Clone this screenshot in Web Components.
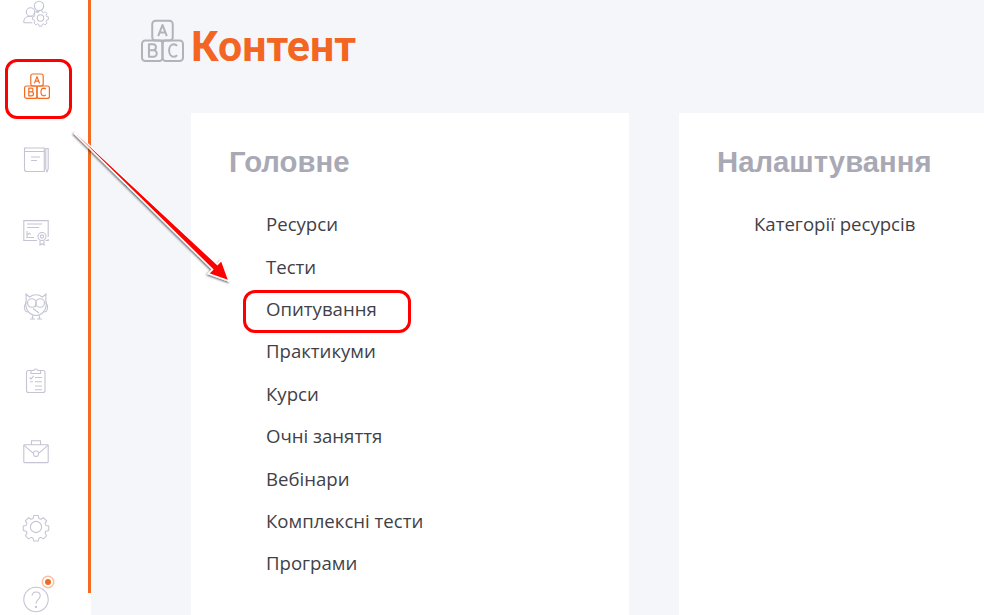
<!DOCTYPE html>
<html lang="uk">
<head>
<meta charset="utf-8">
<title>Контент</title>
<style>
    html, body { margin: 0; height: 100%; overflow: hidden; background: white; }
    body { font-family: "Open Sans", "Liberation Sans", sans-serif; }
</style>
</head>
<body>

<x-app>
    <x-sidebar slot="side">
        <x-nav-icon name="users"></x-nav-icon>
        <x-nav-icon name="blocks" active></x-nav-icon>
        <x-nav-icon name="notebook"></x-nav-icon>
        <x-nav-icon name="cert"></x-nav-icon>
        <x-nav-icon name="owl"></x-nav-icon>
        <x-nav-icon name="clipboard"></x-nav-icon>
        <x-nav-icon name="case"></x-nav-icon>
        <x-nav-icon name="gear"></x-nav-icon>
        <x-nav-icon name="help" dot></x-nav-icon>
    </x-sidebar>

    <x-page-title>Контент</x-page-title>

    <x-card heading="Головне">
        <x-link>Ресурси</x-link>
        <x-link>Тести</x-link>
        <x-link>Опитування</x-link>
        <x-link>Практикуми</x-link>
        <x-link>Курси</x-link>
        <x-link>Очні заняття</x-link>
        <x-link>Вебінари</x-link>
        <x-link>Комплексні тести</x-link>
        <x-link>Програми</x-link>
    </x-card>
    <x-card heading="Налаштування">
        <x-link>Категорії ресурсів</x-link>
    </x-card>
</x-app>

<script>
const blocks = `
    <g fill="none" stroke="currentColor" stroke-width="1.2" stroke-linejoin="round">
        <rect x="6.800" y="1" width="12.400" height="12" rx="2"/>
        <rect x=".6" y="13" width="12.400" height="12.400" rx="2"/>
        <rect x="13" y="13" width="12.400" height="12.400" rx="2"/>
        <path d="M10.400 10.400 13 3.600l2.600 6.800M11.300 8.200h3.400"/>
        <path d="M4.800 22.800v-7.600h2.400a1.800 1.800 0 0 1 0 3.700H4.800h2.800a1.900 1.900 0 0 1 0 3.900z"/>
        <path d="M21.800 16.200a2.700 2.700 0 0 0-1.900-1c-1.800 0-2.900 1.700-2.900 3.800s1.100 3.800 2.900 3.800a2.700 2.700 0 0 0 1.900-1"/>
    </g>`;

// line icons of the side menu, all on a 26px box
const icons = {
    users: `<g fill="none" stroke="currentColor" stroke-width="1.100">
        <circle cx="16" cy="6" r="4.700"/>
        <circle cx="7.500" cy="12" r="4.200"/>
        <path d="M.8 22.800v-1.500c0-3 2.800-5 6.700-5 .6 0 1.200 0 1.700.1M.8 22.800h8.500"/>
        <path d="M13 11.800c1-.4 2-.6 3-.6"/>
        <circle cx="17.500" cy="18" r="3.200"/>
        <path d="M16 9.800h3l.5 2 1.400.6 1.800-1.100 2.100 2.100-1.100 1.800.6 1.400 2 .5v3l-2 .5-.6 1.400 1.100 1.800-2.100 2.100-1.800-1.100-1.400.6-.5 2h-3l-.5-2-1.400-.6-1.800 1.100-2.100-2.100 1.100-1.800-.6-1.400-2-.5v-3l2-.5.6-1.400-1.100-1.800 2.100-2.100 1.800 1.100 1.400-.6z" transform="translate(0 -.3) translate(17.500 18.300) scale(.9) translate(-17.500 -18.300)" stroke-linejoin="round"/>
    </g>`,
    blocks,
    notebook: `<g fill="none" stroke="currentColor" stroke-width="1.100">
        <path d="M1.500 1h19.800v23.500H3.500a2 2 0 0 1-2-2z"/>
        <path d="M1.500 4.500h19.800M8 10h9M8 13.500h6"/>
        <path d="M22.800 1.500h2.400v20.500l-1.200 2.800-1.200-2.800z"/>
    </g>`,
    cert: `<g fill="none" stroke="currentColor" stroke-width="1.100">
        <path d="M14 20.500H.8V.6h24.400v16.500M22.500 20.500h2.700v-1.500"/>
        <path d="M4 4h15M4 7.500h12M4 11v6.500h7"/>
        <path d="M4.500 15l1.800-1.800 1.500 1.500"/>
        <circle cx="19" cy="16.500" r="4"/>
        <circle cx="19" cy="16.500" r="1.600"/>
        <path d="M17 20.500v4.500l2-1.300 2 1.300v-4.500"/>
    </g>`,
    owl: `<g fill="none" stroke="currentColor" stroke-width="1.100" transform="translate(1.500 0)">
        <path d="M1.500 0 5 3a11 11 0 0 1 13 0L21.500 0l-.2 6.500c1 3 .6 6-.8 9-1.300 2.500-4.500 6-9 6s-7.700-3.500-9-6C1.100 12.500.7 9.500 1.700 6.500z"/>
        <circle cx="7.300" cy="9" r="4.300"/>
        <circle cx="15.700" cy="9" r="4.300"/>
        <path d="M11.500 10.500l-1 2.800M1.700 9C-.5 11-.7 15 1 17c.5.500 1.500 1 2.300 1M21.300 9c2.200 2 2.400 6 .7 8-.5.500-1.500 1-2.300 1M8 25v-3.600M5.500 25h5M15 25v-3.600M12.500 25h5"/>
        <path d="M8.500 14.500l6 4.500"/>
    </g>`,
    clipboard: `<g fill="none" stroke="currentColor" stroke-width="1.100" transform="translate(3 0)">
        <path d="M5 3.500H2.500a2 2 0 0 0-2 2v18a2 2 0 0 0 2 2h14.500a2 2 0 0 0 2-2v-18a2 2 0 0 0-2-2H14.500"/>
        <path d="M5 6.500v-3h2.800a2 2 0 0 1 3.900 0h2.800v3z"/>
        <path d="M3.500 10.500l1.500 1.500 2.800-3.200M9 10.500h7M9 14.800h7M4 14.800h3M9 19h7M9 22.800h7"/>
    </g>`,
    case: `<g fill="none" stroke="currentColor" stroke-width="1.100">
        <rect x=".8" y="4.800" width="24.400" height="17.800" rx=".8"/>
        <path d="M8.500 4.800V.8h9v4M.8 5.200l9.600 8.100M25.200 5.200l-9.600 8.100"/>
        <rect x="10.600" y="11" width="4.800" height="5.400" rx="1.800"/>
    </g>`,
    gear: `<g fill="none" stroke="currentColor" stroke-width="1.100">
        <circle cx="13" cy="13" r="5.600"/>
        <path d="M10.600.8h4.800l.7 3.100 2.200.9 2.700-1.700 3.400 3.400-1.700 2.700.9 2.200 3.100.7v4.800l-3.100.7-.9 2.200 1.700 2.700-3.400 3.400-2.700-1.700-2.200.9-.7 3.100h-4.800l-.7-3.100-2.200-.9-2.700 1.700-3.400-3.400 1.700-2.700-.9-2.200-3.100-.7v-4.800l3.100-.7.9-2.200-1.700-2.700 3.400-3.400 2.700 1.700 2.200-.9z" transform="translate(13 13) scale(.93) translate(-13 -13.100)" stroke-linejoin="round"/>
    </g>`,
    help: `<g fill="none" stroke="currentColor" stroke-width="1.100">
        <circle cx="13" cy="12.500" r="12.200"/>
        <path d="M9 8.800c.3-2.200 2-3.800 4.200-3.800 2.300 0 4 1.600 4 3.800 0 3.500-4.200 3.700-4.200 7.700"/>
        <circle cx="13" cy="20" r=".6"/>
    </g>`
};

class XApp extends HTMLElement {
    constructor () {
        super();
        this.attachShadow({ mode: 'open' }).innerHTML = `
            <style>
                :host { display: grid; grid-template-columns: 91px 1fr; height: 615px; position: relative; overflow: hidden; background: white; }
                main { background: #f4f6fa; padding-inline-start: 100px; overflow: hidden; display: grid;
                    grid-template-columns: 438px 438px; grid-template-rows: 113px 1fr; column-gap: 50px; }
                ::slotted(x-page-title) { grid-column: 1 / -1; }
                .mark { position: absolute; border: 3px solid #f00; box-sizing: border-box; border-radius: 12px; }
                svg.arrow { position: absolute; left: 0; top: 0; overflow: visible; }
            </style>
            <slot name="side"></slot>
            <main>
                <slot></slot>
            </main>
            <div class="mark" style="left:5px;top:59px;width:67px;height:60px"></div>
            <div class="mark" style="left:243px;top:290px;width:168px;height:43px"></div>
            <svg class="arrow" width="984" height="615" viewBox="0 0 984 615">
                <defs><filter id="s" x="-20%" y="-20%" width="140%" height="140%"><feDropShadow dx="-1" dy="1" stdDeviation="1.300" flood-color="#000" flood-opacity=".6"/></filter></defs>
                <path filter="url(#s)" d="M74.500 133.500 212.600 269.500 208.400 273.800 229 281 221.500 260.200 217.400 264.500 75.500 132.500Z" fill="#f00" stroke="#fff" stroke-width="1.500" stroke-linejoin="miter"/>
            </svg>`;
    }
}

class XSidebar extends HTMLElement {
    constructor () {
        super();
        this.attachShadow({ mode: 'open' }).innerHTML = `
            <style>
                :host { display: flex; flex-direction: column; align-items: center; box-sizing: border-box; width: 91px; height: 593px;
                    border-right: 3px solid #f26b21; padding-right: 17px; gap: 47.4px; }
            </style>
            <slot></slot>`;
    }
}

class XNavIcon extends HTMLElement {
    constructor () {
        super();
        const name = this.getAttribute('name');
        const dot = this.hasAttribute('dot') ? '<i></i>' : '';
        this.attachShadow({ mode: 'open' }).innerHTML = `
            <style>
                :host { display: block; position: relative; width: 26px; height: 26px; flex: none; color: hsl(240 15% 80%); }
                :host([active]) { color: #f26b21; margin-inline-start: 3px; }
                svg { display: block; overflow: visible; }
                i { position: absolute; left: 22.500px; top: -8.500px; width: 6px; height: 6px; border-radius: 50%; background: #f26b21; box-shadow: 0 0 0 2px #fff, 0 0 0 3.500px #f9c1a3; }
            </style>
            <svg width="26" height="26" viewBox="0 0 26 26">${icons[name]}</svg>${dot}`;
    }
}

class XPageTitle extends HTMLElement {
    constructor () {
        super();
        this.attachShadow({ mode: 'open' }).innerHTML = `
            <style>
                :host { display: flex; align-items: center; gap: 7px; height: 113px; box-sizing: border-box; margin-inline-start: -50px; padding-block-end: 33px;
                    color: #f26522; font: 700 42.800px/1 Roboto, sans-serif; }
                svg { color: #b1b3b8; flex: none; }
                span { padding-block-start: 12px; }
            </style>
            <svg width="43" height="43" viewBox="0 0 26 26">${blocks}</svg>
            <span><slot></slot></span>`;
    }
}

class XCard extends HTMLElement {
    constructor () {
        super();
        this.attachShadow({ mode: 'open' }).innerHTML = `
            <style>
                :host { display: block; box-sizing: border-box; background: white; padding: 31px 38px 0; }
                h2 { margin: 0 0 23.300px; color: #a9a9b5; font: 700 29.300px/36px "Liberation Sans", sans-serif; }
            </style>
            <h2>${this.getAttribute('heading')}</h2>
            <slot></slot>`;
    }
}

class XLink extends HTMLElement {
    constructor () {
        super();
        this.attachShadow({ mode: 'open' }).innerHTML = `
            <style>
                :host { display: block; height: 42.4px; padding-inline-start: 37px; color: #3f4147; font: 400 18.600px/42.4px "Open Sans", sans-serif; white-space: nowrap; }
            </style>
            <slot></slot>`;
    }
}

customElements.define('x-app', XApp);
customElements.define('x-sidebar', XSidebar);
customElements.define('x-nav-icon', XNavIcon);
customElements.define('x-page-title', XPageTitle);
customElements.define('x-card', XCard);
customElements.define('x-link', XLink);
</script>
</body>
</html>
